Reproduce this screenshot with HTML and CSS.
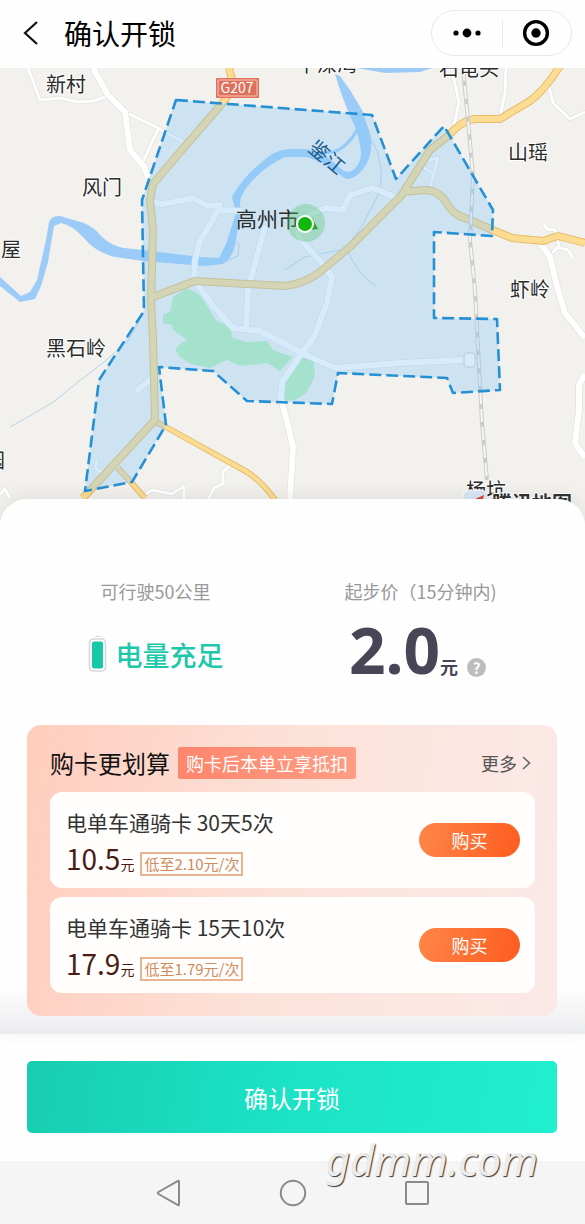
FILE: index.html
```html
<!DOCTYPE html>
<html lang="zh-CN">

<head>
    <meta charset="UTF-8">
    <meta name="viewport" content="width=device-width, initial-scale=1.0">
    <link rel="stylesheet" href="styles.css">
    <title>确认开锁</title>
</head>

<body>
    <header class="topbar">
        <button class="back" aria-label="返回">
            <svg width="16" height="26" viewBox="0 0 16 26"><path d="M14 2 L2 13 L14 24" /></svg>
        </button>
        <h1>确认开锁</h1>
        <div class="capsule">
            <button aria-label="更多选项">
                <svg width="30" height="12" viewBox="0 0 30 12">
                    <circle cx="4" cy="6" r="2.6" /><circle cx="15" cy="6" r="4.4" /><circle cx="26" cy="6" r="2.6" />
                </svg>
            </button>
            <button aria-label="关闭">
                <svg width="28" height="28" viewBox="0 0 28 28">
                    <circle class="ring" cx="14" cy="14" r="11.4" /><circle cx="14" cy="14" r="4.7" />
                </svg>
            </button>
        </div>
    </header>

    <main>
        <svg class="map" viewBox="0 68 585 458" role="img" aria-label="地图">
            <rect class="land" x="0" y="68" width="585" height="458" />
            <!-- water -->
            <g class="water">
                <path d="M0 277 L10 286 L21 296 L30 292 L37 280 L46 240 L49 222 Q52 215 60 216 L84 223 Q94 227 102 237 Q112 246 124 248 L143 250 L200 257 L219 258 L226 244 L236 213 L232 197 Q242 178 262 162 Q274 150 289 149 L307 149 L325 155 L341 169 Q349 176 357 166 Q363 158 360 146 Q358 131 351 118 Q342 98 335 74 L340 76 L350 90 L362 110 L371 137 Q373 152 366 165 Q356 180 346 179 L325 164 L307 157 L285 157 Q268 165 257 176 Q240 192 240 204 L240 215 L236 240 Q233 258 223 264 L205 266 L143 261 L115 257 Q95 252 84 238 Q72 225 61 223 L54 226 L48 262 L41 286 L35 299 L20 302 L0 286 Z" />
                <path d="M357 68 L432 68 L420 72 L385 73 Z" />
                <path class="stream" d="M357 130 Q347 148 333 152 L310 154" />
                <path class="brook" d="M10 427 L28 417 L55 401 L78 382 L104 362 L128 341 L143 313 M234 240 L239 244 L238 256 L222 263 M372 140 Q387 168 378 195 L362 226 L346 248 Q358 275 376 286 M285 270 L305 257 L335 251 L347 249" />
            </g>
            <g class="park">
                <path d="M173 297 L187 288 L200 295 L216 320 L230 327 L233 338 L247 342 L267 341 L273 350 L293 357 L280 371 L267 363 L240 366 L227 360 L210 368 L191 364 L180 357 L175 350 L180 344 L187 340 L173 330 L172 325 L163 323 L163 315 L170 312 Z" />
                <path d="M287 374 L305 355 L314 362 L315 376 L306 393 L295 400 L284 401 Z" />
            </g>
            <!-- small roads -->
            <defs>
                <path id="lanes" d="M28 68 L40 100 L60 98 L78 102 L93 101 L108 96 M125 112 L158 128 L185 143 M158 129 L143 162 M453 76 L459 102 L453 130 M506 68 L505 93 L500 117 M549 87 L553 103 L570 119 L585 112 M543 223 L547 229 L555 230 L559 246 L552 253 M557 247 L568 250 L573 258 M190 139 L210 115 M185 143 L190 133 M97 460 L95 468 L102 473 M145 495 L152 490 L172 494 L184 486 L184 500 M208 500 L214 488 L223 484 L223 472 L235 460 M0 494 L5 489 L10 498 M418 163 L438 158 L430 187 M424 168 L435 174" />
                <path id="roads" d="M93 68 L108 95 L125 112 L130 150 L143 165 L148 177 M150 202 L163 204 L193 198 L207 206 L220 205 L218 211 L200 241 L195 260 L194 280 L213 306 L233 328 L260 331 L302 353 L335 368 L400 363 L465 360 M220 210 L242 211 M265 226 L248 290 L246 328 M297 228 L305 217 L325 208 L343 210 L350 195 L373 188 L395 197 M297 230 L300 239 L322 263 L332 277 L327 303 L314 337 L302 353 L282 382 L281 399 L288 425 L293 447 L290 500 M540 243 L550 257 L558 290 L565 313 L585 338 M585 374 L579 385 L579 410 L575 443 L585 458 M136 392 L152 378" />
                <path id="mains" d="M229 68 L234 88 L220 106 L186 145 L153 184 L150 200 L153 230 L151 300 L153 340 L155 420 L83 498 M153 297 L195 281 L285 286 Q304 284 320 272 L351 246 L401 196 L430 150 L448 136 Q464 118 478 119 L500 119 L530 101 Q545 90 560 66 M403 192 L425 190 Q438 190 446 202 Q453 215 465 218 L495 231 L512 238 L543 241 L558 236 L585 243" />
                <path id="branches" d="M156 422 L166 427 L200 446 L240 468 Q260 478 275 500 M118 468 L145 498" />
            </defs>
            <use class="edge lane" href="#lanes" /><use class="white lane" href="#lanes" />
            <use class="edge road" href="#roads" /><use class="white road" href="#roads" />
            <rect class="station" x="464" y="353" width="11" height="14" rx="2" />
            <use class="gold branch-edge" href="#branches" /><use class="yellow branch" href="#branches" />
            <use class="gold main-edge" href="#mains" /><use class="yellow main" href="#mains" />
            <path class="rail" d="M463 68 L468 120 L473 177 L470 240 L475 290 L478 347 L482 423 L487 480" />
            <path class="rail-ties" d="M463 68 L468 120 L473 177 L470 240 L475 290 L478 347 L482 423 L487 480" />

            <!-- service area -->
            <path class="area" d="M176 100 L372 115 L396 179 L444 126 L493 210 L492 236 L434 232 L434 318 L497 319 L500 390 L453 393 L447 378 L338 373 L332 404 L247 401 L213 371 L159 367 L166 425 L132 482 L85 491 L99 380 L144 311 L142 200 Z" />

            <rect class="shield" x="216" y="78" width="43" height="20" rx="1" />
            <rect class="shield-line" x="218" y="80" width="39" height="16" rx="1" />
            <text class="shield-text" x="237" y="93">G207</text>

            <g class="place">
                <text x="46" y="92">新村</text>
                <text x="82" y="195">风门</text>
                <text x="1" y="257">屋</text>
                <text x="508" y="160">山瑶</text>
                <text x="510" y="297">虾岭</text>
                <text x="46" y="356">黑石岭</text>
                <text x="-15" y="468">园</text>
                <text x="297" y="72">下深湾</text>
                <text x="439" y="76">石龟头</text>
                <text x="466" y="498">杨坑</text>
                <text class="city" x="236" y="227">高州市</text>
            </g>
            <text class="river-name" x="307" y="150" transform="rotate(40 307 150)">鉴江</text>
            <rect class="brand-mark" x="463" y="490" width="24" height="20" rx="6" />
            <path class="brand-arrow" d="M473 500 L484 495 L481 506 Z" />
            <text class="brand" x="492" y="511">腾讯地图</text>

            <circle class="halo" cx="306" cy="223" r="19" />
            <path class="heading" d="M312 218 L318 229 L308 230 Z" />
            <circle class="dot" cx="305" cy="224" r="8" />
        </svg>

        <section class="sheet">
            <div class="stats">
                <div class="stat">
                    <p class="caption">可行驶50公里</p>
                    <div class="value battery">
                        <svg width="19" height="38" viewBox="0 0 19 38">
                            <path class="cap" d="M6 2 Q9.5 -0.5 13 2 Z" />
                            <rect class="shell" x="1.5" y="4" width="16" height="32" rx="4" />
                            <rect class="charge" x="4" y="6.5" width="11" height="27" rx="2" />
                        </svg>
                        <strong>电量充足</strong>
                    </div>
                </div>
                <div class="stat">
                    <p class="caption">起步价（15分钟内)</p>
                    <div class="value price">
                        <b>2.0</b><span>元</span>
                        <button class="help" aria-label="计费说明">?</button>
                    </div>
                </div>
            </div>

            <div class="cards">
                <div class="cards-head">
                    <h2>购卡更划算</h2>
                    <span class="badge">购卡后本单立享抵扣</span>
                    <a href="#" class="more">更多
                        <svg width="9" height="14" viewBox="0 0 9 14"><path d="M1 1 L7.5 7 L1 13" /></svg>
                    </a>
                </div>
                <article class="card">
                    <div>
                        <h3>电单车通骑卡 30天5次</h3>
                        <p class="cost"><b>10.5</b><span>元</span><em>低至2.10元/次</em></p>
                    </div>
                    <button class="buy">购买</button>
                </article>
                <article class="card">
                    <div>
                        <h3>电单车通骑卡 15天10次</h3>
                        <p class="cost"><b>17.9</b><span>元</span><em>低至1.79元/次</em></p>
                    </div>
                    <button class="buy">购买</button>
                </article>
            </div>
        </section>
    </main>

    <footer>
        <div class="action">
            <button class="unlock">确认开锁</button>
        </div>
        <nav class="softkeys">
            <button aria-label="后退"><svg width="28" height="28" viewBox="0 0 28 28"><path d="M24 2.5 V25.5 Q24 26.5 23 26 L3.5 15 Q2 14 3.5 13 L23 2 Q24 1.5 24 2.5 Z" /></svg></button>
            <button aria-label="主页"><svg width="28" height="28" viewBox="0 0 28 28"><circle cx="14" cy="14" r="12.2" /></svg></button>
            <button aria-label="最近任务"><svg width="28" height="28" viewBox="0 0 28 28"><rect x="3" y="3" width="22" height="22" rx="1" /></svg></button>
        </nav>
        <span class="watermark">gdmm.com</span>
    </footer>
</body>

</html>
```
FILE: styles.css
```css
* {
    margin: 0;
    padding: 0;
    box-sizing: border-box;
}

body {
    min-height: 100vh;
    display: flex;
    flex-direction: column;
    background-color: #fefefe;
    color: #222;
    font-family: "Noto Sans CJK SC", sans-serif;
}

button {
    border: none;
    background: none;
    font-family: inherit;
    cursor: pointer;
}

svg {
    display: block;
}

h1, h2, h3 {
    font-weight: 400;
}

/* top bar */
.topbar {
    height: 68px;
    padding: 0 13px 2px 23px;
    display: flex;
    align-items: center;
}

.back {
    margin-right: 25px;
}

.back path {
    fill: none;
    stroke: #111;
    stroke-width: 2.2;
}

h1 {
    flex: 1;
    font-size: 28px;
    line-height: 40px;
    color: #000;
}

.capsule {
    width: 141px;
    height: 46px;
    border: 1px solid #e8e8e8;
    border-radius: 23px;
    display: flex;
}

.capsule button {
    flex: 1;
    display: flex;
    align-items: center;
    justify-content: center;
}

.capsule button + button {
    background: linear-gradient(#e8e8e8, #e8e8e8) no-repeat left center / 1px 27px;
}

.ring {
    fill: none;
    stroke: #000;
    stroke-width: 3.4;
}

/* map */
.map {
    width: 100%;
}

.map path, .map use {
    stroke-linejoin: round;
}

.land { fill: #f2f1ee; }
.water { fill: #9bcbf6; }
.stream { fill: none; stroke: #9bcbf6; stroke-width: 3; }
.brook { fill: none; stroke: #b5d4ea; stroke-width: 1; }
.park { fill: #b4f0b6; }

.edge, .white, .gold, .yellow { fill: none; }
.edge { stroke: #dcdcdc; }
.white { stroke: #fff; }
.edge.lane { stroke-width: 4; }
.white.lane { stroke-width: 3; }
.edge.road { stroke-width: 7; }
.white.road { stroke-width: 6; }
.gold { stroke: #e5bd6b; }
.yellow { stroke: #fcdc92; }
.main-edge { stroke-width: 8; }
.main { stroke-width: 6; }
.branch-edge { stroke-width: 6; }
.branch { stroke-width: 4; }
.station { fill: #fff; stroke: #ccc; }

.rail {
    fill: none;
    stroke: #ccc;
    stroke-width: 4;
}

.rail-ties {
    fill: none;
    stroke: #f6f6f6;
    stroke-width: 2;
    stroke-dasharray: 13 5;
}

.area {
    fill: rgba(135, 200, 248, 0.34);
    stroke: #2590d3;
    stroke-width: 2.6;
    stroke-dasharray: 12 5;
}

.shield { fill: #df705b; }
.shield-line { fill: none; stroke: #f8c9bd; }

.shield-text {
    fill: #fff;
    font-size: 14px;
    text-anchor: middle;
}

.place {
    font-size: 20px;
    fill: #2b2b2b;
    stroke: #fff;
    stroke-width: 2px;
    paint-order: stroke;
}

.city {
    font-size: 21px;
    stroke: none;
}

.river-name {
    font-size: 20px;
    fill: #145a8c;
}

.brand {
    font-size: 20px;
    font-weight: 700;
    fill: #333;
    stroke: #fff;
    stroke-width: 2px;
    paint-order: stroke;
}

.brand-mark { fill: #dbe8f5; stroke: #fff; }
.brand-arrow { fill: #d94530; }
.halo { fill: rgba(90, 200, 110, 0.36); }
.heading { fill: #28a428; }
.dot { fill: #10b70c; stroke: #fff; stroke-width: 2; }

/* sheet */
.sheet {
    position: relative;
    margin-top: -27px;
    padding: 80px 28px 18px 27px;
    border-radius: 27px 27px 0 0;
    background: linear-gradient(to top, #ebecee, #fefefe 48px);
    box-shadow: 0 -3px 18px rgba(0, 0, 0, 0.08);
}

.stats {
    margin: 0 4px 0 -4px;
    display: grid;
    grid-template-columns: 1fr 1fr;
    text-align: center;
}

.caption {
    font-size: 18px;
    line-height: 24px;
    color: #999;
}

.value {
    height: 72px;
    margin-top: 15px;
    display: flex;
    justify-content: center;
    align-items: center;
}

.battery {
    gap: 9px;
}

.battery strong {
    font-size: 27px;
    font-weight: 500;
    color: #20c8ab;
}

.cap { fill: #d5d9d8; }
.shell { fill: #fff; stroke: #d5d9d8; stroke-width: 1.6; }
.charge { fill: #16c8a8; }

.price {
    padding-right: 6px;
    align-items: baseline;
    color: #474556;
}

.price b {
    font-family: "Noto Sans", sans-serif;
    font-size: 64px;
    line-height: 64px;
}

.price span {
    font-size: 18px;
    font-weight: 700;
    line-height: 24px;
}

.help {
    width: 19px;
    height: 19px;
    margin-left: 9px;
    border-radius: 50%;
    background-color: #bdbdbd;
    color: #fff;
    font-size: 15px;
    font-weight: 700;
    line-height: 19px;
}

/* ride cards */
.cards {
    margin-top: 35px;
    padding: 22px 22px 23px 23px;
    border-radius: 14px;
    background: linear-gradient(100deg, #ffcdbd, #fce3da 50%, #fbe9e8);
    display: flex;
    flex-direction: column;
    gap: 9px;
}

.cards-head {
    margin-bottom: 4px;
    display: flex;
    align-items: center;
}

h2 {
    font-size: 24px;
    line-height: 32px;
    color: #111;
}

.badge {
    margin-left: 8px;
    padding: 0 8px;
    border-radius: 2px;
    background: linear-gradient(90deg, #ff866c, #fd9d84);
    color: #fff;
    font-size: 18px;
    line-height: 32px;
}

.more {
    margin-left: auto;
    padding-right: 4px;
    display: flex;
    align-items: center;
    gap: 5px;
    color: #555;
    font-size: 18px;
    line-height: 32px;
    text-decoration: none;
}

.more path {
    fill: none;
    stroke: #666;
    stroke-width: 1.6;
}

.card {
    padding: 12px 15px 12px 16px;
    border-radius: 12px;
    background-color: #fffefd;
    display: flex;
    justify-content: space-between;
    align-items: center;
}

h3 {
    font-size: 21px;
    line-height: 36px;
    color: #333;
}

.cost {
    height: 36px;
    display: flex;
    align-items: baseline;
    color: #4b1d12;
}

.cost b {
    font-size: 28px;
    font-weight: 400;
    line-height: 36px;
}

.cost span {
    font-size: 14px;
    line-height: 20px;
}

.cost em {
    margin-left: 6px;
    padding: 0 2px;
    border: 2px solid #e9b391;
    color: #d08a5c;
    font-size: 15px;
    font-style: normal;
    line-height: 20px;
}

.buy {
    width: 101px;
    height: 34px;
    border-radius: 17px;
    background: linear-gradient(100deg, #ff8548, #fe5c1f);
    color: #fff;
    font-size: 18px;
    line-height: 34px;
}

/* bottom */
footer {
    position: relative;
}

.action {
    padding: 27px 28px 28px 27px;
}

.unlock {
    width: 100%;
    height: 72px;
    border-radius: 5px;
    background: linear-gradient(100deg, #18cdb0, #1ce3c5 50%, #20efd0);
    color: #fff;
    font-size: 24px;
}

.softkeys {
    height: 63px;
    display: flex;
    justify-content: center;
    align-items: center;
    gap: 96px;
    background-color: #f6f5f6;
}

.softkeys svg {
    fill: none;
    stroke: #8a8a8a;
    stroke-width: 2;
}

.watermark {
    position: absolute;
    right: 47px;
    bottom: 36px;
    color: #ececec;
    font-family: "Noto Sans", sans-serif;
    font-size: 42px;
    font-style: italic;
    line-height: 56px;
    text-shadow: 1px 1px 1px #333;
}
```
